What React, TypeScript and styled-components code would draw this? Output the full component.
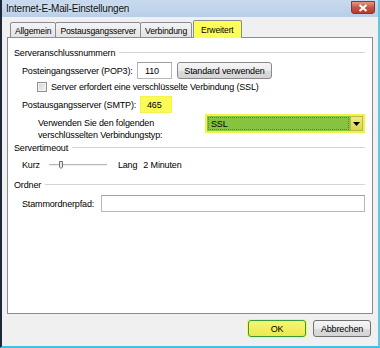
import { FunctionComponent, ReactNode } from 'react';
import styled, { createGlobalStyle } from 'styled-components';

const GlobalStyle = createGlobalStyle`
    html, body {
        margin: 0;
        padding: 0;
        background: #f0f0f0;
    }
    body {
        font-family: 'Liberation Sans', Arial, sans-serif;
        font-size: 9px;
        letter-spacing: -0.15px;
        color: #000;
    }
`;

const GroupBox: FunctionComponent<{ title: string; gap?: number; children?: ReactNode }> = ({ title, gap, children }) => (
    <SGroup $gap={gap}>
        <SGroupHead>
            <span>{title}</span>
            <SGroupLine />
        </SGroupHead>
        {children}
    </SGroup>
);

const SliderIcon = () => (
    <svg width="60" height="10" viewBox="0 0 60 10">
        <line x1="1" y1="4.5" x2="59" y2="4.5" stroke="#b8b8b8" strokeWidth="1" />
        <line x1="1" y1="5.5" x2="59" y2="5.5" stroke="#eeeeee" strokeWidth="1" />
        <path d="M11.5 1.5 H14.5 V7 L13 8.5 L11.5 7 Z" fill="#e9e9e9" stroke="#6f6f6f" strokeWidth="1" />
    </svg>
);

export default function App() {
    return (
        <>
            <GlobalStyle />
            <SWindow>
                <STitleBar>
                    <span>Internet-E-Mail-Einstellungen</span>
                    <SClose>
                        <svg width="10" height="8" viewBox="0 0 10 8">
                            <path d="M1.5 1 L8.5 7 M8.5 1 L1.5 7" stroke="#fff" strokeWidth="2" />
                        </svg>
                    </SClose>
                </STitleBar>

                <SBody>
                    <STabs>
                        <STab>Allgemein</STab>
                        <STab>Postausgangsserver</STab>
                        <STab>Verbindung</STab>
                        <STab $active>Erweitert</STab>
                    </STabs>

                    <SPanel>
                        <GroupBox title="Serveranschlussnummern" gap={0}>
                            <SRow $top={3}>
                                <SLabel $width={115}>Posteingangsserver (POP3):</SLabel>
                                <SInput $width={35}>110</SInput>
                                <SButton $width={95} $left={5}>Standard verwenden</SButton>
                            </SRow>
                            <SCheckRow>
                                <SCheckbox />
                                <span>Server erfordert eine verschlüsselte Verbindung (SSL)</span>
                            </SCheckRow>
                            <SRow $top={3}>
                                <SLabel $width={118}>Postausgangsserver (SMTP):</SLabel>
                                <SInput $width={32} $highlight>465</SInput>
                            </SRow>
                            <SRow $top={1} $alignTop>
                                <STwoLine>
                                    <span>Verwenden Sie den folgenden</span>
                                    <span>verschlüsselten Verbindungstyp:</span>
                                </STwoLine>
                                <SSelect>
                                    <SSelectValue>SSL</SSelectValue>
                                    <SSelectArrow>
                                        <svg width="7" height="4" viewBox="0 0 7 4">
                                            <path d="M0 0 H7 L3.5 4 Z" fill="#000" />
                                        </svg>
                                    </SSelectArrow>
                                </SSelect>
                            </SRow>
                        </GroupBox>

                        <GroupBox title="Servertimeout">
                            <SSliderRow>
                                <span>Kurz</span>
                                <SSliderWrap>
                                    <SliderIcon />
                                </SSliderWrap>
                                <span>Lang</span>
                                <SValue>2 Minuten</SValue>
                            </SSliderRow>
                        </GroupBox>

                        <GroupBox title="Ordner">
                            <SRow $top={4}>
                                <SLabel $width={79}>Stammordnerpfad:</SLabel>
                                <SInput $width={264} />
                            </SRow>
                        </GroupBox>
                    </SPanel>

                    <SFooter>
                        <SDialogButton $primary>OK</SDialogButton>
                        <SDialogButton>Abbrechen</SDialogButton>
                    </SFooter>
                </SBody>
            </SWindow>
        </>
    );
}

const SWindow = styled.div`
    width: 380px;
    height: 348px;
    box-sizing: border-box;
    display: flex;
    flex-direction: column;
    background: #f0f0f0;
    border-left: 2px solid #1d2738;
    border-right: 2px solid #62c6e2;
    border-bottom: 2px solid #3fc0e4;
    overflow: hidden;
`;

const STitleBar = styled.div`
    height: 17px;
    flex: none;
    display: flex;
    align-items: center;
    justify-content: space-between;
    padding: 0 3px 0 4px;
    background: linear-gradient(#c8daee, #b8cfe8);
    font-size: 10px;
    letter-spacing: -0.2px;
    color: #111;
    text-shadow: 0 0 4px #e6f0fa;
`;

const SClose = styled.div`
    width: 22px;
    height: 11px;
    margin-top: -2px;
    border: 1px solid #7b3a35;
    border-radius: 0 0 3px 3px;
    background: linear-gradient(#e19a8e, #c75446 50%, #b8392a);
    display: flex;
    align-items: center;
    justify-content: center;
`;

const SBody = styled.div`
    flex: 1;
    display: flex;
    flex-direction: column;
    padding: 3px 5px 0 5px;
`;

const STabs = styled.div`
    display: flex;
    align-items: flex-end;
    height: 18px;
    padding-left: 3px;
    position: relative;
    z-index: 1;
    margin-bottom: -1px;
`;

const STab = styled.div<{ $active?: boolean }>`
    height: ${p => (p.$active ? 18 : 16)}px;
    box-sizing: border-box;
    padding: ${p => (p.$active ? '1px 7px 0' : '1px 4px 0')};
    margin: ${p => (p.$active ? '0 0 0 1px' : '0 0 0 -1px')};
    border: 1px solid #898c95;
    border-bottom: ${p => (p.$active ? 'none' : '1px solid #898c95')};
    border-radius: 2px 2px 0 0;
    background: ${p => (p.$active ? '#fdfd58' : 'linear-gradient(#f4f4f4, #e3e3e3)')};
    font-size: 8.6px;
    white-space: nowrap;
    display: flex;
    align-items: center;

    &:first-child {
        margin-left: 0;
    }
`;

const SPanel = styled.div`
    height: 277px;
    box-sizing: border-box;
    border: 1px solid #898c95;
    background: #fff;
    padding: 8px 7px 0 6px;
    display: flex;
    flex-direction: column;
`;

const SGroup = styled.div<{ $gap?: number }>`
    display: flex;
    flex-direction: column;
    margin-bottom: ${p => p.$gap ?? 4}px;
`;

const SGroupHead = styled.div`
    display: flex;
    align-items: center;
    height: 13px;
    gap: 4px;
`;

const SGroupLine = styled.div`
    flex: 1;
    border-top: 1px solid #d5d5d5;
    border-bottom: 1px solid #fff;
`;

const SRow = styled.div<{ $top?: number; $alignTop?: boolean }>`
    display: flex;
    align-items: ${p => (p.$alignTop ? 'flex-start' : 'center')};
    padding-left: 8px;
    margin-top: ${p => p.$top ?? 0}px;
`;

const SLabel = styled.span<{ $width: number }>`
    width: ${p => p.$width}px;
    flex: none;
    white-space: nowrap;
`;

const SInput = styled.div<{ $width: number; $highlight?: boolean }>`
    width: ${p => p.$width}px;
    height: 17px;
    box-sizing: border-box;
    border: 1px solid ${p => (p.$highlight ? '#f4f44c' : '#b5b8bf')};
    border-top-color: ${p => (p.$highlight ? '#f4f44c' : '#9da0a7')};
    background: ${p => (p.$highlight ? '#fbfb57' : '#fff')};
    padding: 0 0 0 ${p => (p.$highlight ? 6 : 7)}px;
    display: flex;
    align-items: center;
`;

const SButton = styled.div<{ $width: number; $left?: number }>`
    width: ${p => p.$width}px;
    height: 17px;
    margin-left: ${p => p.$left ?? 0}px;
    box-sizing: border-box;
    border: 1px solid #8a8a8a;
    border-radius: 3px;
    background: linear-gradient(#f6f6f6, #ebebeb 50%, #dcdcdc 51%, #d4d4d4);
    display: flex;
    align-items: center;
    justify-content: center;
    white-space: nowrap;
`;

const SCheckRow = styled.div`
    display: flex;
    align-items: center;
    gap: 4px;
    padding-left: 23px;
    margin-top: 2px;
    height: 12px;
`;

const SCheckbox = styled.div`
    width: 10px;
    height: 10px;
    box-sizing: border-box;
    border: 1px solid #8f8f8f;
    background: linear-gradient(135deg, #d4d4d4, #f4f4f4);
    box-shadow: inset 0 0 0 1px #f2f2f2;
`;

const STwoLine = styled.div`
    display: flex;
    flex-direction: column;
    padding-left: 16px;
    width: 167px;
    flex: none;
    line-height: 12px;
    padding-top: 3px;
    white-space: nowrap;
`;

const SSelect = styled.div`
    width: 161px;
    height: 19px;
    box-sizing: border-box;
    border: 2px solid #f1f147;
    background: #86c440;
    display: flex;
    align-items: stretch;
`;

const SSelectValue = styled.div`
    flex: 1;
    margin: 1px;
    padding-left: 2px;
    border: 1px dotted #c64d3a;
    display: flex;
    align-items: center;
`;

const SSelectArrow = styled.div`
    width: 13px;
    box-sizing: border-box;
    border: 1px solid #b9b94a;
    background: linear-gradient(#efef7a, #d6d655);
    display: flex;
    align-items: center;
    justify-content: center;
`;

const SSliderRow = styled.div`
    display: flex;
    align-items: center;
    padding-left: 8px;
    height: 18px;
    margin-top: 2px;
`;

const SSliderWrap = styled.div`
    margin: 0 10px 0 8px;
    display: flex;
`;

const SValue = styled.span`
    margin-left: 6px;
`;

const SFooter = styled.div`
    display: flex;
    justify-content: flex-end;
    gap: 7px;
    padding: 6px 2px 0 0;
`;

const SDialogButton = styled.div<{ $primary?: boolean }>`
    width: 58px;
    height: 17px;
    box-sizing: border-box;
    border: 1px solid ${p => (p.$primary ? '#3a9a3a' : '#707070')};
    border-radius: 3px;
    background: ${p =>
        p.$primary
            ? 'linear-gradient(#f6f674, #eaea4c)'
            : 'linear-gradient(#f6f6f6, #ebebeb 50%, #dcdcdc 51%, #d4d4d4)'};
    box-shadow: ${p => (p.$primary ? '0 0 0 1px #f8f84a' : 'none')};
    display: flex;
    align-items: center;
    justify-content: center;
`;
